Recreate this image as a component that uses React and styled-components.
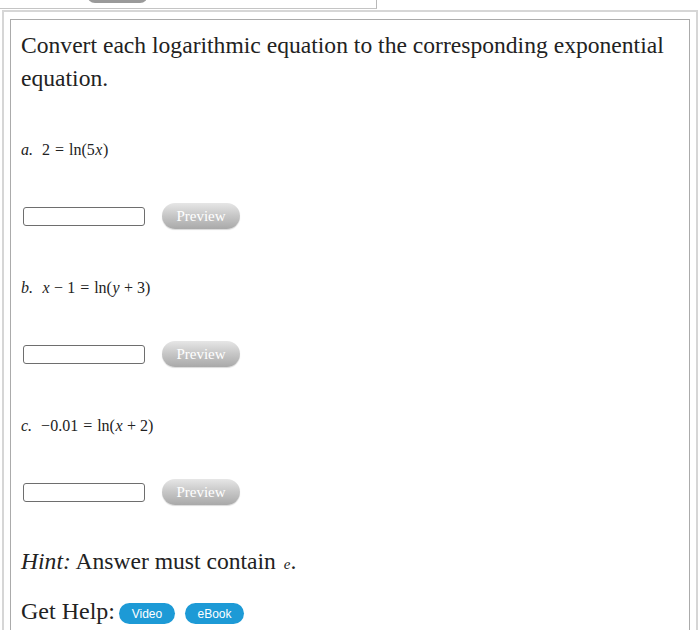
import React from "react";
import styled, { createGlobalStyle } from "styled-components";

const Global = createGlobalStyle`
  html, body { margin: 0; padding: 0; background: #fff; }
  body { font-family: "Liberation Serif", "Times New Roman", serif; color: #222; overflow: hidden; }
`;

const TopStrip = styled.div`
  width: 376px;
  height: 8px;
  border-right: 1px solid #b8b8b8;
  border-bottom: 1px solid #c4c4c4;
  position: relative;
  overflow: hidden;
`;

const TopPill = styled.div`
  position: absolute;
  left: 87px;
  top: -20px;
  width: 61px;
  height: 23px;
  border-radius: 8px;
  background: #9a9a9a;
`;

const Outer = styled.div`
  margin: 1px 2px 0 2px;
  border: 2px solid #d6d6d6;
  border-bottom: none;
  padding: 7px 6px 0 6px;
  height: 640px;
`;

const Card = styled.div`
  border: 1px solid #ababab;
  padding: 9px 10px 0 10px;
  height: 700px;
`;

const Title = styled.p`
  margin: 0;
  font-size: 23.6px;
  line-height: 33px;
  color: #222;
`;

const Items = styled.div`
  margin-top: 45px;
  display: flex;
  flex-direction: column;
  gap: 49px;
`;

const Item = styled.div`
  display: flex;
  flex-direction: column;
  gap: 43px;
`;

const MathLine = styled.div`
  font-family: "Liberation Serif", "Times New Roman", serif;
  font-size: 16px;
  line-height: 20px;
  height: 20px;
  color: #222;
  white-space: pre;
`;

const V = styled.i`
  font-style: italic;
  margin: 0 0.5px;
`;

const Op = styled.span`
  margin: 0 ${(p) => (p.rel ? 5 : 4)}px;
`;

const Label = styled.i`
  font-style: italic;
  margin-right: 9px;
`;

const AnswerRow = styled.div`
  display: flex;
  align-items: center;
  gap: 17px;
  height: 26px;
  padding-left: 2px;
`;

const AnswerInput = styled.input`
  box-sizing: border-box;
  width: 122px;
  height: 19px;
  border: 1px solid #6e6e6e;
  border-radius: 3px;
  background: #fff;
  padding: 0;
  margin: 0;
`;

const PreviewButton = styled.button`
  width: 78px;
  height: 26px;
  border: none;
  border-radius: 13px;
  background: linear-gradient(#e6e6e6, #c6c6c6 50%, #a9a9a9);
  box-shadow: 0 1px 1px rgba(0, 0, 0, 0.15);
  color: #fff;
  font-family: "Liberation Serif", "Times New Roman", serif;
  font-size: 15px;
  padding: 0;
`;

const Hint = styled.p`
  margin: 40px 0 0 0;
  font-size: 23.6px;
  line-height: 33px;
`;

const SmallE = styled.i`
  font-size: 15px;
  margin-left: 2px;
`;

const HelpRow = styled.div`
  margin-top: 14px;
  display: flex;
  align-items: center;
  font-size: 24px;
  line-height: 33px;
`;

const HelpButton = styled.button`
  height: 21px;
  width: ${(p) => p.w}px;
  margin-left: ${(p) => p.ml}px;
  margin-top: 4px;
  border: none;
  border-radius: 11px;
  background: #1d9ad6;
  color: #fff;
  font-family: "Liberation Sans", Arial, sans-serif;
  font-size: 12px;
  padding: 0;
`;

const items = [
  { label: "a", body: <>2<Op rel>=</Op>ln(5<V>x</V>)</> },
  { label: "b", body: <><V>x</V><Op>−</Op>1<Op rel>=</Op>ln(<V>y</V><Op>+</Op>3)</> },
  { label: "c", body: <>−0.01<Op rel>=</Op>ln(<V>x</V><Op>+</Op>2)</> },
];

export default function App() {
  return (
    <>
      <Global />
      <TopStrip>
        <TopPill />
      </TopStrip>
      <Outer>
        <Card>
          <Title>
            Convert each logarithmic equation to the corresponding exponential equation.
          </Title>
          <Items>
            {items.map((it) => (
              <Item key={it.label}>
                <MathLine>
                  <Label>{it.label}.</Label>
                  {it.body}
                </MathLine>
                <AnswerRow>
                  <AnswerInput type="text" />
                  <PreviewButton>Preview</PreviewButton>
                </AnswerRow>
              </Item>
            ))}
          </Items>
          <Hint>
            <i>Hint:</i> Answer must contain <SmallE>e</SmallE>.
          </Hint>
          <HelpRow>
            Get Help:
            <HelpButton w={56} ml={4}>Video</HelpButton>
            <HelpButton w={59} ml={10}>eBook</HelpButton>
          </HelpRow>
        </Card>
      </Outer>
    </>
  );
}
